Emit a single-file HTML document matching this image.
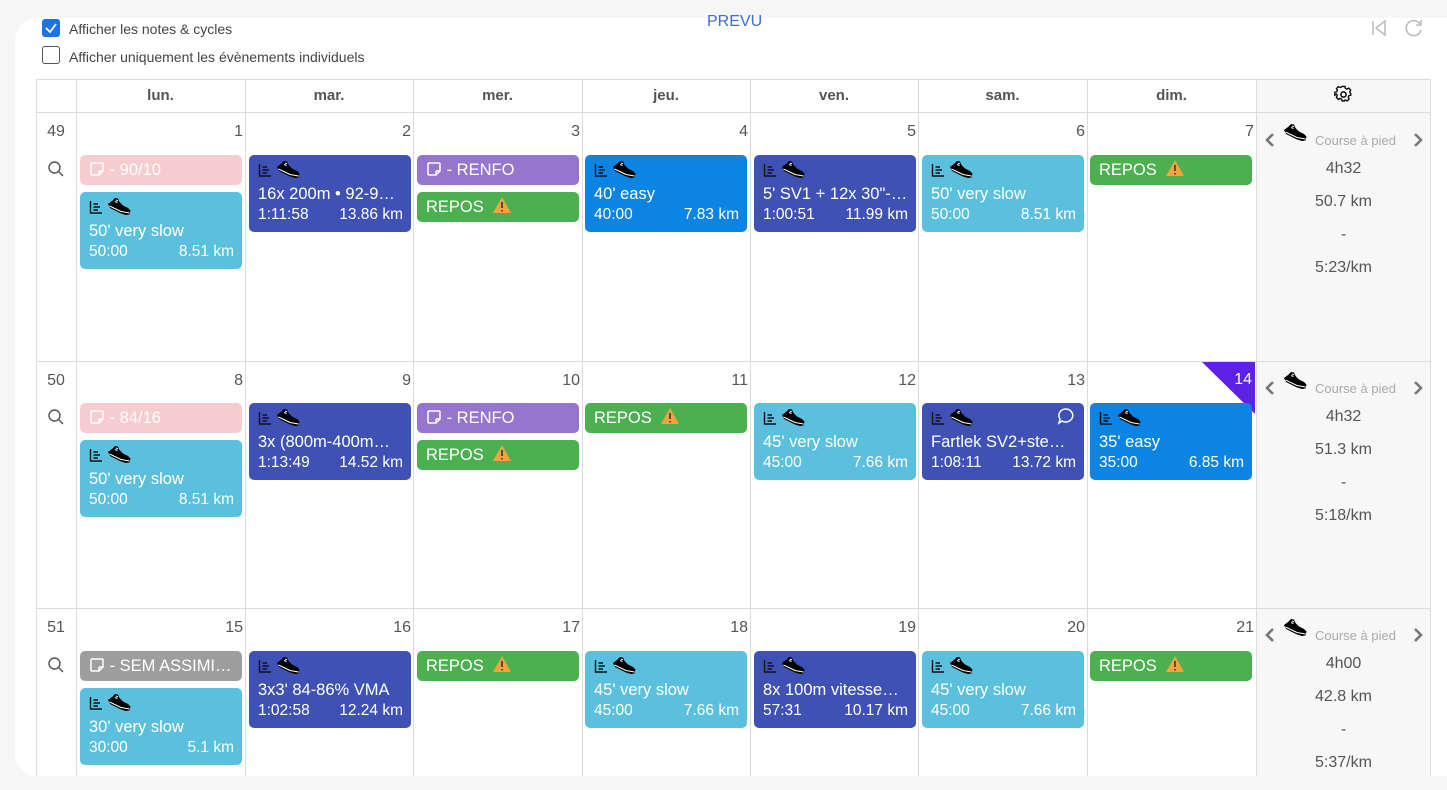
<!DOCTYPE html>
<html><head><meta charset="utf-8"><style>
*{box-sizing:border-box;margin:0;padding:0}
body{width:1447px;height:790px;background:#f6f6f6;font-family:"Liberation Sans",sans-serif;position:relative;overflow:hidden}
.panel{position:absolute;left:15px;top:18px;width:1450px;height:758px;background:#fff;border-radius:22px 0 0 22px}
.a{position:absolute}
.lbl{font-size:14px;color:#444}
.cb{position:absolute;width:18px;height:18px;border-radius:3px}
.vl{position:absolute;width:1px;background:#dcdcdc}
.hl{position:absolute;height:1px;background:#dcdcdc}
.hd{position:absolute;top:79px;height:33px;line-height:33px;text-align:center;font-size:15px;font-weight:bold;color:#555}
.dn{position:absolute;font-size:16px;color:#555;text-align:right;width:30px}
.wk{position:absolute;left:36px;width:40px;text-align:center;font-size:16px;color:#555}
.c{position:absolute;width:162px;border-radius:5px;color:#fff;overflow:hidden}
.c .ic{position:absolute;left:9px;top:5px;height:20px;display:flex;gap:4px;align-items:center}
.c .t{position:absolute;left:9px;right:8px;top:30px;font-size:16.5px;white-space:nowrap;overflow:hidden;text-overflow:ellipsis}
.c .m{position:absolute;left:9px;right:8px;top:51px;font-size:15.5px;display:flex;justify-content:space-between}
.s{height:30px;line-height:31px;padding-left:9px;font-size:16.5px;white-space:nowrap;overflow:hidden;text-overflow:ellipsis}
.b1{background:#3f51b5}.b2{background:#5bc0de}.b3{background:#0b84e3}.g{background:#4caf50}.p{background:#9575cd}.pk{background:#f6ccce}.gr{background:#9e9e9e}
.sum{position:absolute;left:1257px;width:173px;background:#f7f7f7;text-align:center;color:#555}
.sum .v{position:absolute;left:0;width:173px;font-size:16px}
.sum .cp{position:absolute;left:58px;top:20px;font-size:13px;color:#aaa}
.warn{display:inline-block;vertical-align:-2px;margin-left:8px}
</style></head><body>
<svg width="0" height="0" style="position:absolute">
<symbol id="shoe" viewBox="0 0 24 20"><path d="M1 7 L5 4 L8 1 L11 1.5 L12.5 5 L16 8.5 L21 11 L23.5 13.5 L22.5 17.5 L19 18 L14 16.5 L3 11 Z" fill="#000"/><path d="M2.5 9 L14 14.5 L22.5 16" stroke="#fff" stroke-width="1" fill="none"/><path d="M8 4.5 L10.5 5.5 M9 3 L11 3.8" stroke="#fff" stroke-width="1"/></symbol>
<symbol id="lst" viewBox="0 0 14 14"><path d="M1.5 1 V13 H13 M4.5 4 H9 M4.5 7 H11 M4.5 10 H9" stroke="#111" stroke-width="1.4" fill="none"/></symbol>
<symbol id="note" viewBox="0 0 16 16"><path d="M3 2 H13 Q14 2 14 3 V10 L10 14 H3 Q2 14 2 13 V3 Q2 2 3 2 Z M14 10 H11 Q10 10 10 11 V14" stroke="#fff" stroke-width="1.5" fill="none"/></symbol>
<symbol id="wr" viewBox="0 0 20 18"><path d="M10 1 L19 17 H1 Z" fill="#f4a340"/><path d="M10 6 V12 M10 14 V15.5" stroke="#333" stroke-width="1.6"/></symbol>
</svg>
<div class="panel"></div>
<div class="cb" style="left:42px;top:19px;background:#1a73e8"><svg width="18" height="18"><path d="M4 9 L8 13 L14 5" stroke="#fff" stroke-width="1.8" fill="none"/></svg></div>
<div class="a lbl" style="left:69px;top:21px">Afficher les notes &amp; cycles</div>
<div class="cb" style="left:42px;top:46px;border:1.5px solid #555"></div>
<div class="a lbl" style="left:69px;top:49px">Afficher uniquement les évènements individuels</div>
<div class="a" style="left:707px;top:13px;font-size:16px;color:#3f6be0">PREVU</div>
<svg class="a" style="left:1370px;top:19px" width="18" height="18"><path d="M3 2 V16 M15 2 L6 9 L15 16 Z" stroke="#bbb" stroke-width="1.5" fill="none"/></svg>
<svg class="a" style="left:1404px;top:18px" width="20" height="20"><path d="M16 6 A7.5 7.5 0 1 0 17 12" stroke="#bbb" stroke-width="1.6" fill="none"/><path d="M17 2 V7 H12" stroke="#bbb" stroke-width="1.6" fill="none"/></svg>

<div class="sum" style="top:79px;height:697px"></div>
<div class="hl" style="left:36px;top:79px;width:1395px"></div>
<div class="hl" style="left:36px;top:112px;width:1395px"></div>
<div class="hl" style="left:36px;top:361px;width:1395px"></div>
<div class="hl" style="left:36px;top:608px;width:1395px"></div>
<div class="vl" style="left:36px;top:79px;height:697px"></div>
<div class="vl" style="left:76px;top:79px;height:697px"></div>
<div class="vl" style="left:245px;top:79px;height:697px"></div>
<div class="vl" style="left:413px;top:79px;height:697px"></div>
<div class="vl" style="left:582px;top:79px;height:697px"></div>
<div class="vl" style="left:750px;top:79px;height:697px"></div>
<div class="vl" style="left:918px;top:79px;height:697px"></div>
<div class="vl" style="left:1087px;top:79px;height:697px"></div>
<div class="vl" style="left:1256px;top:79px;height:697px"></div>
<div class="vl" style="left:1430px;top:79px;height:697px"></div>

<div class="hd" style="left:76px;width:169px">lun.</div>
<div class="hd" style="left:245px;width:168px">mar.</div>
<div class="hd" style="left:413px;width:169px">mer.</div>
<div class="hd" style="left:582px;width:168px">jeu.</div>
<div class="hd" style="left:750px;width:168px">ven.</div>
<div class="hd" style="left:918px;width:169px">sam.</div>
<div class="hd" style="left:1087px;width:169px">dim.</div>
<svg class="a" style="left:1334px;top:85px" width="19" height="19" viewBox="0 0 24 24"><path d="M10 2h4l.6 2.6 2.2 1 2.3-1.4 2.8 2.8-1.4 2.3 1 2.2L22 12v0l0 2-2.6.6-1 2.2 1.4 2.3-2.8 2.8-2.3-1.4-2.2 1L14 22h-4l-.6-2.6-2.2-1-2.3 1.4-2.8-2.8 1.4-2.3-1-2.2L0 14v-4l2.6-.6 1-2.2L2.2 4.9 5 2.1l2.3 1.4 2.2-1z" fill="none" stroke="#000" stroke-width="1.8" transform="translate(1 0) scale(.92)"/><circle cx="12" cy="12" r="3.3" fill="none" stroke="#000" stroke-width="1.8"/></svg>

<div class="wk" style="top:123px">49</div><div class="wk" style="top:372px">50</div><div class="wk" style="top:619px">51</div>
<svg class="a" style="left:47px;top:160px" width="18" height="18"><circle cx="7.5" cy="7.5" r="5.5" stroke="#555" stroke-width="1.4" fill="none"/><path d="M11.5 11.5 L16 16" stroke="#555" stroke-width="1.4"/></svg>
<svg class="a" style="left:47px;top:408px" width="18" height="18"><circle cx="7.5" cy="7.5" r="5.5" stroke="#555" stroke-width="1.4" fill="none"/><path d="M11.5 11.5 L16 16" stroke="#555" stroke-width="1.4"/></svg>
<svg class="a" style="left:47px;top:656px" width="18" height="18"><circle cx="7.5" cy="7.5" r="5.5" stroke="#555" stroke-width="1.4" fill="none"/><path d="M11.5 11.5 L16 16" stroke="#555" stroke-width="1.4"/></svg>

<div class="dn" style="left:213px;top:123px">1</div><div class="dn" style="left:381px;top:123px">2</div><div class="dn" style="left:550px;top:123px">3</div><div class="dn" style="left:718px;top:123px">4</div><div class="dn" style="left:886px;top:123px">5</div><div class="dn" style="left:1055px;top:123px">6</div><div class="dn" style="left:1224px;top:123px">7</div>
<div class="dn" style="left:213px;top:372px">8</div><div class="dn" style="left:381px;top:372px">9</div><div class="dn" style="left:550px;top:372px">10</div><div class="dn" style="left:718px;top:372px">11</div><div class="dn" style="left:886px;top:372px">12</div><div class="dn" style="left:1055px;top:372px">13</div>
<div class="a" style="left:1202px;top:362px;width:0;height:0;border-top:52px solid #5e22e6;border-left:53px solid transparent"></div>
<div class="dn" style="left:1222px;top:371px;color:#fff">14</div>
<div class="dn" style="left:213px;top:619px">15</div><div class="dn" style="left:381px;top:619px">16</div><div class="dn" style="left:550px;top:619px">17</div><div class="dn" style="left:718px;top:619px">18</div><div class="dn" style="left:886px;top:619px">19</div><div class="dn" style="left:1055px;top:619px">20</div><div class="dn" style="left:1224px;top:619px">21</div>

<!-- row 1 -->
<div class="c pk s" style="left:80px;top:155px"><svg width="16" height="16" style="vertical-align:-2px"><use href="#note"/></svg> - 90/10</div>
<div class="c b2" style="left:80px;top:192px;height:77px"><div class="ic"><svg width="14" height="14"><use href="#lst"/></svg><svg width="24" height="20"><use href="#shoe"/></svg></div><div class="t">50' very slow</div><div class="m"><span>50:00</span><span>8.51 km</span></div></div>
<div class="c b1" style="left:249px;top:155px;height:77px"><div class="ic"><svg width="14" height="14"><use href="#lst"/></svg><svg width="24" height="20"><use href="#shoe"/></svg></div><div class="t">16x 200m • 92-9…</div><div class="m"><span>1:11:58</span><span>13.86 km</span></div></div>
<div class="c p s" style="left:417px;top:155px"><svg width="16" height="16" style="vertical-align:-2px"><use href="#note"/></svg> - RENFO</div>
<div class="c g s" style="left:417px;top:192px">REPOS<svg class="warn" width="20" height="18"><use href="#wr"/></svg></div>
<div class="c b3" style="left:585px;top:155px;height:77px"><div class="ic"><svg width="14" height="14"><use href="#lst"/></svg><svg width="24" height="20"><use href="#shoe"/></svg></div><div class="t">40' easy</div><div class="m"><span>40:00</span><span>7.83 km</span></div></div>
<div class="c b1" style="left:754px;top:155px;height:77px"><div class="ic"><svg width="14" height="14"><use href="#lst"/></svg><svg width="24" height="20"><use href="#shoe"/></svg></div><div class="t">5' SV1 + 12x 30"-…</div><div class="m"><span>1:00:51</span><span>11.99 km</span></div></div>
<div class="c b2" style="left:922px;top:155px;height:77px"><div class="ic"><svg width="14" height="14"><use href="#lst"/></svg><svg width="24" height="20"><use href="#shoe"/></svg></div><div class="t">50' very slow</div><div class="m"><span>50:00</span><span>8.51 km</span></div></div>
<div class="c g s" style="left:1090px;top:155px">REPOS<svg class="warn" width="20" height="18"><use href="#wr"/></svg></div>

<!-- row 2 -->
<div class="c pk s" style="left:80px;top:403px"><svg width="16" height="16" style="vertical-align:-2px"><use href="#note"/></svg> - 84/16</div>
<div class="c b2" style="left:80px;top:440px;height:77px"><div class="ic"><svg width="14" height="14"><use href="#lst"/></svg><svg width="24" height="20"><use href="#shoe"/></svg></div><div class="t">50' very slow</div><div class="m"><span>50:00</span><span>8.51 km</span></div></div>
<div class="c b1" style="left:249px;top:403px;height:77px"><div class="ic"><svg width="14" height="14"><use href="#lst"/></svg><svg width="24" height="20"><use href="#shoe"/></svg></div><div class="t">3x (800m-400m…</div><div class="m"><span>1:13:49</span><span>14.52 km</span></div></div>
<div class="c p s" style="left:417px;top:403px"><svg width="16" height="16" style="vertical-align:-2px"><use href="#note"/></svg> - RENFO</div>
<div class="c g s" style="left:417px;top:440px">REPOS<svg class="warn" width="20" height="18"><use href="#wr"/></svg></div>
<div class="c g s" style="left:585px;top:403px">REPOS<svg class="warn" width="20" height="18"><use href="#wr"/></svg></div>
<div class="c b2" style="left:754px;top:403px;height:77px"><div class="ic"><svg width="14" height="14"><use href="#lst"/></svg><svg width="24" height="20"><use href="#shoe"/></svg></div><div class="t">45' very slow</div><div class="m"><span>45:00</span><span>7.66 km</span></div></div>
<div class="c b1" style="left:922px;top:403px;height:77px"><div class="ic"><svg width="14" height="14"><use href="#lst"/></svg><svg width="24" height="20"><use href="#shoe"/></svg></div><svg class="a" style="right:9px;top:4px" width="18" height="18"><path d="M9 2 A7 6.5 0 1 1 5 14 L2 16 L3 12 A7 6.5 0 0 1 9 2 Z" stroke="#fff" stroke-width="1.5" fill="none"/></svg><div class="t">Fartlek SV2+ste…</div><div class="m"><span>1:08:11</span><span>13.72 km</span></div></div>
<div class="c b3" style="left:1090px;top:403px;height:77px"><div class="ic"><svg width="14" height="14"><use href="#lst"/></svg><svg width="24" height="20"><use href="#shoe"/></svg></div><div class="t">35' easy</div><div class="m"><span>35:00</span><span>6.85 km</span></div></div>

<!-- row 3 -->
<div class="c gr s" style="left:80px;top:651px"><svg width="16" height="16" style="vertical-align:-2px"><use href="#note"/></svg> - SEM ASSIMI…</div>
<div class="c b2" style="left:80px;top:688px;height:77px"><div class="ic"><svg width="14" height="14"><use href="#lst"/></svg><svg width="24" height="20"><use href="#shoe"/></svg></div><div class="t">30' very slow</div><div class="m"><span>30:00</span><span>5.1 km</span></div></div>
<div class="c b1" style="left:249px;top:651px;height:77px"><div class="ic"><svg width="14" height="14"><use href="#lst"/></svg><svg width="24" height="20"><use href="#shoe"/></svg></div><div class="t">3x3' 84-86% VMA</div><div class="m"><span>1:02:58</span><span>12.24 km</span></div></div>
<div class="c g s" style="left:417px;top:651px">REPOS<svg class="warn" width="20" height="18"><use href="#wr"/></svg></div>
<div class="c b2" style="left:585px;top:651px;height:77px"><div class="ic"><svg width="14" height="14"><use href="#lst"/></svg><svg width="24" height="20"><use href="#shoe"/></svg></div><div class="t">45' very slow</div><div class="m"><span>45:00</span><span>7.66 km</span></div></div>
<div class="c b1" style="left:754px;top:651px;height:77px"><div class="ic"><svg width="14" height="14"><use href="#lst"/></svg><svg width="24" height="20"><use href="#shoe"/></svg></div><div class="t">8x 100m vitesse…</div><div class="m"><span>57:31</span><span>10.17 km</span></div></div>
<div class="c b2" style="left:922px;top:651px;height:77px"><div class="ic"><svg width="14" height="14"><use href="#lst"/></svg><svg width="24" height="20"><use href="#shoe"/></svg></div><div class="t">45' very slow</div><div class="m"><span>45:00</span><span>7.66 km</span></div></div>
<div class="c g s" style="left:1090px;top:651px">REPOS<svg class="warn" width="20" height="18"><use href="#wr"/></svg></div>

<!-- summaries -->
<div class="sum" style="top:113px;height:248px;background:none">
<svg class="a" style="left:6px;top:18px" width="14" height="18"><path d="M10 3 L4 9 L10 15" stroke="#777" stroke-width="2.6" fill="none"/></svg>
<svg class="a" style="left:26px;top:10px" width="24" height="20"><use href="#shoe"/></svg>
<div class="cp">Course à pied</div>
<svg class="a" style="left:154px;top:18px" width="14" height="18"><path d="M4 3 L10 9 L4 15" stroke="#777" stroke-width="2.6" fill="none"/></svg>
<div class="v" style="top:47px">4h32</div><div class="v" style="top:80px">50.7 km</div><div class="v" style="top:113px">-</div><div class="v" style="top:146px">5:23/km</div></div>
<div class="sum" style="top:361px;height:248px;background:none">
<svg class="a" style="left:6px;top:18px" width="14" height="18"><path d="M10 3 L4 9 L10 15" stroke="#777" stroke-width="2.6" fill="none"/></svg>
<svg class="a" style="left:26px;top:10px" width="24" height="20"><use href="#shoe"/></svg>
<div class="cp">Course à pied</div>
<svg class="a" style="left:154px;top:18px" width="14" height="18"><path d="M4 3 L10 9 L4 15" stroke="#777" stroke-width="2.6" fill="none"/></svg>
<div class="v" style="top:47px">4h32</div><div class="v" style="top:80px">51.3 km</div><div class="v" style="top:113px">-</div><div class="v" style="top:146px">5:18/km</div></div>
<div class="sum" style="top:608px;height:168px;background:none">
<svg class="a" style="left:6px;top:18px" width="14" height="18"><path d="M10 3 L4 9 L10 15" stroke="#777" stroke-width="2.6" fill="none"/></svg>
<svg class="a" style="left:26px;top:10px" width="24" height="20"><use href="#shoe"/></svg>
<div class="cp">Course à pied</div>
<svg class="a" style="left:154px;top:18px" width="14" height="18"><path d="M4 3 L10 9 L4 15" stroke="#777" stroke-width="2.6" fill="none"/></svg>
<div class="v" style="top:47px">4h00</div><div class="v" style="top:80px">42.8 km</div><div class="v" style="top:113px">-</div><div class="v" style="top:146px">5:37/km</div></div>
</body></html>
